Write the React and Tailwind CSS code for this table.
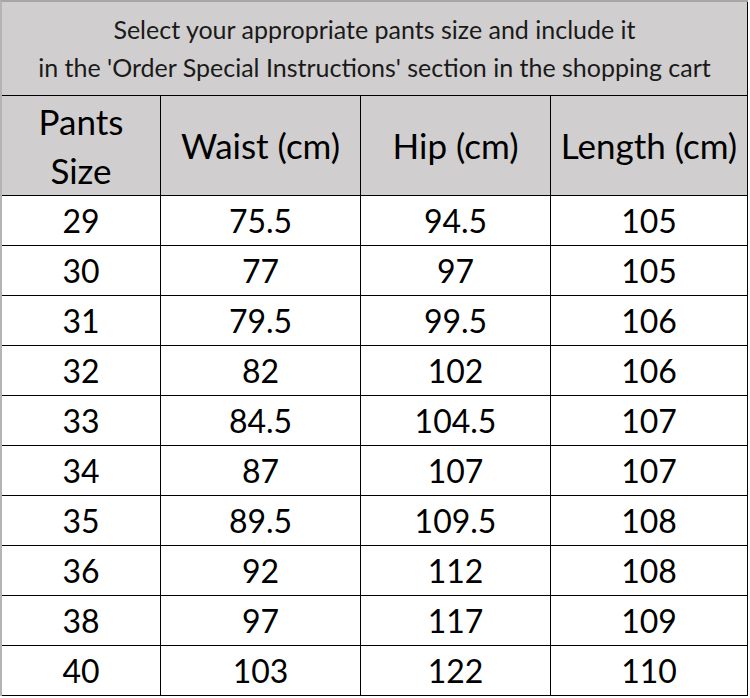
const rows = [
  ["29", "75.5", "94.5", "105"],
  ["30", "77", "97", "105"],
  ["31", "79.5", "99.5", "106"],
  ["32", "82", "102", "106"],
  ["33", "84.5", "104.5", "107"],
  ["34", "87", "107", "107"],
  ["35", "89.5", "109.5", "108"],
  ["36", "92", "112", "108"],
  ["38", "97", "117", "109"],
  ["40", "103", "122", "110"],
];

const grid = "grid grid-cols-[159px_200px_190px_197px]";
const cell = "flex items-center justify-center border-r border-black text-center";

export default function App() {
  return (
    <div className="w-[750px] h-[698px] bg-white font-['Lato',sans-serif] text-black">
      <div className="w-[748px] border-l-2 border-t-2 border-l-[#b4b4b4] border-t-[#a6a6a6]">
        <div className="h-[94px] flex flex-col items-center justify-center bg-[#d0cece] border-r border-b border-black text-[25px] leading-[38px] pb-[2px] text-[#1a1a1a]">
          <div>Select your appropriate pants size and include it</div>
          <div>in the 'Order Special Instructions' section in the shopping cart</div>
        </div>

        <div className={`${grid} h-[100px] bg-[#d0cece] border-b border-black text-[35px]`}>
          <div className={`${cell} flex-col leading-[49px]`}>
            <span>Pants</span>
            <span>Size</span>
          </div>
          <div className={cell}>Waist (cm)</div>
          <div className={cell}>Hip (cm)</div>
          <div className={cell}>Length (cm)</div>
        </div>

        {rows.map((r, i) => (
          <div key={i} className={`${grid} h-[50px] border-b border-black text-[32px]`}>
            {r.map((v, j) => (
              <div key={j} className={cell}>
                {v}
              </div>
            ))}
          </div>
        ))}
      </div>
    </div>
  );
}
